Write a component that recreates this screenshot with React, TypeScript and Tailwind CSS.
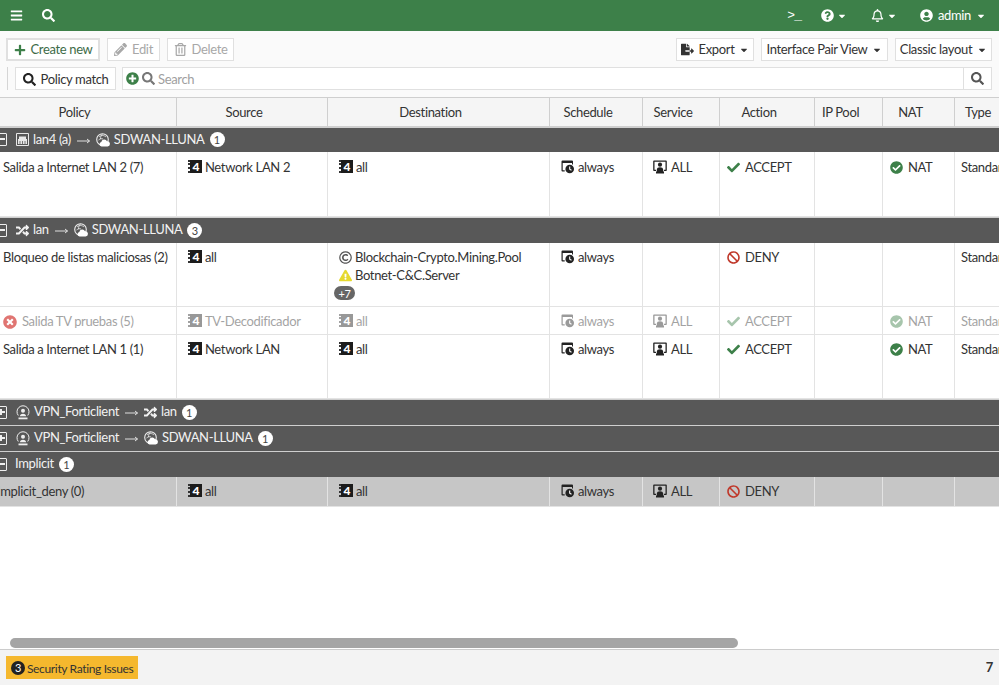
import type { ReactNode } from "react";
import {
  FaBars,
  FaBan,
  FaCaretDown,
  FaCheck,
  FaCheckCircle,
  FaExclamationTriangle,
  FaFileExport,
  FaPencilAlt,
  FaPlus,
  FaPlusCircle,
  FaQuestionCircle,
  FaRandom,
  FaRegBell,
  FaRegCopyright,
  FaRegTrashAlt,
  FaSearch,
  FaTimesCircle,
  FaUserCircle,
} from "react-icons/fa";

const cols = "grid grid-cols-[204px_151px_222px_93px_77px_95px_68px_72px_46px]";

function AddrIcon() {
  return (
    <span className="flex h-[13px] w-[14px] shrink-0 items-center tracking-normal">
      <span className="h-full w-[2px] border-l-2 border-dotted border-[#333]" />
      <span className="flex h-[13px] w-[12px] items-center justify-center bg-[#1c1c1c] text-[12px] font-black leading-none text-white">
        4
      </span>
    </span>
  );
}

function ScheduleIcon() {
  return (
    <svg width="14" height="14" viewBox="0 0 14 14" className="shrink-0">
      <path d="M1.500.5h9.500a1 1 0 0 1 1 1v3h-1V3H1.700v7.300h2V11.500H1.500a1 1 0 0 1-1-1v-9a1 1 0 0 1 1-1z" fill="#222" />
      <circle cx="8.700" cy="9" r="4.300" fill="#222" />
      <path d="M8.700 6.500v2.700l1.800 1.100" stroke="#fff" strokeWidth="1.100" fill="none" />
    </svg>
  );
}

function ServiceIcon() {
  return (
    <svg width="14" height="14" viewBox="0 0 14 14" className="shrink-0">
      <path d="M1 .5h12a.8.8 0 0 1 .8.8v8.900a.8.8 0 0 1-.8.8h-2V9.800h1.500V1.800H1.500v8H3V11H1a.8.8 0 0 1-.8-.8V1.300A.8.8 0 0 1 1 .5z" fill="#222" />
      <circle cx="7" cy="4.700" r="2.100" fill="#222" />
      <path d="M3.800 9.700c0-1.700 1.400-2.500 3.200-2.500s3.200.8 3.200 2.500v1.800h.8v2H3v-2h.8z" fill="#222" />
    </svg>
  );
}

function PortIcon() {
  return (
    <svg width="13" height="13" viewBox="0 0 13 13" className="shrink-0">
      <path d="M.5.5h12v12H.5z" fill="none" stroke="#e8e8e8" />
      <path d="M2 6h9v5H2z M3 3.500h7V6H3z" fill="#e8e8e8" />
      <path d="M4 8v3M6.500 8v3M9 8v3" stroke="#585858" strokeWidth=".8" />
    </svg>
  );
}

function SdwanIcon() {
  return (
    <svg width="14" height="14" viewBox="0 0 14 14" className="shrink-0">
      <circle cx="6.500" cy="6.500" r="5.800" fill="none" stroke="#eee" strokeWidth="1.100" />
      <path d="M3 4c2-2 5-2 7 0M2.500 7c2-1.500 3-1.500 4.500-1M6.500 1c-1.500 1.500-2 3-2 5" stroke="#eee" fill="none" strokeWidth=".8" />
      <path d="M5.500 13.500a2.300 2.300 0 0 1-.2-4.500 3 3 0 0 1 5.700-.7 2.600 2.600 0 0 1 .6 5.200z" fill="#fff" />
    </svg>
  );
}

function VpnIcon() {
  return (
    <svg width="14" height="15" viewBox="0 0 14 15" className="shrink-0">
      <path d="M2.300 10.500a6 6 0 1 1 9.400 0" fill="none" stroke="#eee" strokeWidth="1" />
      <circle cx="7" cy="5.800" r="2" fill="#eee" />
      <path d="M3.800 11.200c.6-1.800 1.700-2.500 3.200-2.500s2.600.7 3.200 2.500z" fill="#eee" />
      <path d="M2.500 12.500h9v1.800h-9z" fill="#eee" />
    </svg>
  );
}

function Arrow() {
  return (
    <svg width="13" height="8" viewBox="0 0 13 8" className="mx-[6px] mt-[2px] shrink-0">
      <path d="M0 4h12.500M10 2l2.500 2-2.500 2" fill="none" stroke="#eee" strokeWidth=".9" />
    </svg>
  );
}

function Toggle({ open }: { open: boolean }) {
  return (
    <span className="relative mr-[9px] h-[13px] w-[10px] shrink-0 rounded-[1px] border-[1.5px] border-[#eee]">
      <span className="absolute left-0 top-[4px] h-[2px] w-[7px] bg-[#eee]" />
      {!open && <span className="absolute left-[2px] top-[2px] h-[6px] w-[2px] bg-[#eee]" />}
    </span>
  );
}

function Count({ n }: { n: number }) {
  return (
    <span className="ml-[5px] flex h-[15px] w-[15px] items-center justify-center rounded-full bg-white text-[11px] leading-none tracking-normal text-[#444]">
      {n}
    </span>
  );
}

function Group({ open, children, n, h = "h-[26px]" }: { open: boolean; children: ReactNode; n: number; h?: string }) {
  return (
    <div className={`flex ${h} items-center border-t border-[#cfcfcf] bg-[#585858] pl-[24px] pb-[1px] text-[13px] text-[#f2f2f2]`}>
      <Toggle open={open} />
      {children}
      <Count n={n} />
    </div>
  );
}

function Cell({ children, className = "" }: { children?: ReactNode; className?: string }) {
  return (
    <div className={`flex min-w-0 items-start gap-[5px] overflow-hidden whitespace-nowrap border-r border-[#e3e3e3] pl-[11px] pt-[7px] ${className}`}>
      {children}
    </div>
  );
}

type RowProps = {
  name: string;
  source: string;
  dest?: ReactNode;
  action: "ACCEPT" | "DENY";
  service?: boolean;
  nat?: boolean;
  h: string;
  dim?: boolean;
  bg?: string;
  namePad?: string;
  className?: string;
};

function Row({ name, source, dest, action, service = true, nat = false, h, dim = false, bg = "bg-white", namePad = "pl-[30px]", className = "" }: RowProps) {
  const fade = dim ? "opacity-45" : "";
  return (
    <div className={`${cols} ${h} ${bg} ${className} border-b border-[#e3e3e3] text-[13px] leading-[15px] text-[#333]`}>
      <Cell className={namePad}>
        {dim && <FaTimesCircle className="mt-[1px] shrink-0 text-[14px] text-[#d9534f] opacity-80" />}
        <span className={fade}>{name}</span>
      </Cell>
      <Cell className="!pl-[11px]">
        <span className={`flex items-start gap-[3px] ${fade}`}>
          <AddrIcon />
          {source}
        </span>
      </Cell>
      <Cell>
        {dest ?? (
          <span className={`flex items-start gap-[3px] ${fade}`}>
            <AddrIcon />
            all
          </span>
        )}
      </Cell>
      <Cell className="!pl-[11px]">
        <span className={`flex items-start gap-[3px] ${fade}`}>
          <ScheduleIcon />
          always
        </span>
      </Cell>
      <Cell className="!pl-[10px]">
        {service && (
          <span className={`flex items-start gap-[4px] ${fade}`}>
            <ServiceIcon />
            ALL
          </span>
        )}
      </Cell>
      <Cell className="!pl-[7px]">
        <span className={`flex items-start gap-[5px] ${fade}`}>
          {action === "ACCEPT" ? (
            <FaCheck className="mt-[1px] text-[13px] text-[#3d8049]" />
          ) : (
            <FaBan className="mt-[1px] text-[13px] text-[#c0392b]" />
          )}
          {action}
        </span>
      </Cell>
      <Cell />
      <Cell className="!pl-[7px]">
        {nat && (
          <span className={`flex items-start gap-[5px] ${fade}`}>
            <FaCheckCircle className="mt-[1px] text-[13px] text-[#3d8049]" />
            NAT
          </span>
        )}
      </Cell>
      <Cell className="!pl-[6px] border-r-0">
        <span className={fade}>{name.startsWith("Imp") ? "" : "Standard"}</span>
      </Cell>
    </div>
  );
}

function Btn({ children, className = "", disabled = false }: { children: ReactNode; className?: string; disabled?: boolean }) {
  return (
    <button
      className={`flex h-[23px] items-center justify-center gap-[5px] whitespace-nowrap border border-[#e0e0e0] bg-white pt-[1px] text-[13px] tracking-[-0.35px] ${
        disabled ? "text-[#a8a8a8]" : "text-[#333]"
      } ${className}`}
    >
      {children}
    </button>
  );
}

function Head({ children, center = false }: { children?: ReactNode; center?: boolean }) {
  return (
    <div className={`flex items-center justify-center whitespace-nowrap border-r border-[#cfcfcf] pt-[2px] last:border-r-0 ${center ? "" : "pr-[16px]"}`}>
      {children}
    </div>
  );
}

export default function App() {
  return (
    <div className="flex h-[685px] w-[999px] flex-col overflow-hidden bg-white tracking-[-0.35px] [font-family:Lato,sans-serif]">
      <header className="flex h-[31px] shrink-0 items-center bg-[#3d8049] pl-[10px] pr-[13px] text-white">
        <FaBars className="text-[13px]" />
        <FaSearch className="ml-[19px] text-[13px]" />
        <div className="ml-auto flex items-center text-[13px]">
          <span className="mr-[20px] font-mono text-[13px] leading-none tracking-[-1px]">{">_"}</span>
          <FaQuestionCircle className="text-[13px]" />
          <FaCaretDown className="ml-[3px] text-[10px]" />
          <FaRegBell className="ml-[24px] text-[13px]" />
          <FaCaretDown className="ml-[3px] text-[10px]" />
          <FaUserCircle className="ml-[23px] text-[13px]" />
          <span className="ml-[5px]">admin</span>
          <FaCaretDown className="ml-[5px] text-[10px]" />
        </div>
      </header>

      <div className="h-[66px] shrink-0 bg-[#fafafa] pl-[6px] pr-[7px]">
        <div className="flex h-[36px] items-center gap-[7px]">
          <Btn className="w-[94px] border-2 border-[#6f9a78] !text-[#3d6b47]">
            <FaPlus className="text-[12px] text-[#3d8049]" />
            Create new
          </Btn>
          <Btn disabled className="w-[53px]">
            <FaPencilAlt className="text-[13px]" />
            Edit
          </Btn>
          <Btn disabled className="w-[67px]">
            <FaRegTrashAlt className="text-[13px]" />
            Delete
          </Btn>
          <Btn className="ml-auto w-[78px]">
            <FaFileExport className="text-[13px]" />
            Export
            <FaCaretDown className="text-[10px]" />
          </Btn>
          <Btn className="w-[127px]">
            Interface Pair View
            <FaCaretDown className="text-[10px]" />
          </Btn>
          <Btn className="w-[97px]">
            Classic layout
            <FaCaretDown className="text-[10px]" />
          </Btn>
        </div>
        <div className="flex h-[23px] items-stretch">
          <span className="mr-[7px] ml-[1px] w-px bg-[#d5d5d5]" />
          <Btn className="w-[101px] !pt-[2px]">
            <FaSearch className="text-[13px] text-[#222]" />
            Policy match
          </Btn>
          <div className="ml-[6px] flex flex-1 items-center border border-[#e0e0e0] bg-white pl-[3px] text-[13px] text-[#a0a0a0]">
            <FaPlusCircle className="text-[13px] text-[#3d8049]" />
            <FaSearch className="ml-[3px] text-[13px] text-[#777]" />
            <span className="ml-[3px] pt-[2px]">Search</span>
            <span className="ml-auto flex h-full w-[28px] items-center justify-center border-l border-[#e0e0e0]">
              <FaSearch className="text-[13px] text-[#555]" />
            </span>
          </div>
        </div>
      </div>

      <div className="min-h-0 flex-1 overflow-hidden">
        <div className="-ml-[27px] w-[1028px] text-[13px] text-[#333]">
          <div className={`${cols} h-[30px] border-y border-[#cfcfcf] bg-[#f5f5f5]`}>
            <Head center>Policy</Head>
            <Head>Source</Head>
            <Head>Destination</Head>
            <Head>Schedule</Head>
            <Head>Service</Head>
            <Head>Action</Head>
            <Head>IP Pool</Head>
            <Head>NAT</Head>
            <Head center>Type</Head>
          </div>

          <Group open n={1} h="h-[25px]">
            <PortIcon />
            <span className="ml-[4px]">lan4 (a)</span>
            <Arrow />
            <SdwanIcon />
            <span className="ml-[4px]">SDWAN-LLUNA</span>
          </Group>
          <Row name="Salida a Internet LAN 2 (7)" source="Network LAN 2" action="ACCEPT" nat h="h-[65px]" className="[&>div]:pt-[8px]" />

          <Group open n={3}>
            <FaRandom className="text-[13px]" />
            <span className="ml-[4px]">lan</span>
            <Arrow />
            <SdwanIcon />
            <span className="ml-[4px]">SDWAN-LLUNA</span>
          </Group>
          <Row
            name="Bloqueo de listas maliciosas (2)"
            source="all"
            action="DENY"
            service={false}
            h="h-[64px]"
            dest={
              <div className="flex flex-col">
                <span className="flex items-center gap-[3px]">
                  <FaRegCopyright className="text-[13px] text-[#555]" />
                  Blockchain-Crypto.Mining.Pool
                </span>
                <span className="mt-[3px] flex items-center gap-[3px]">
                  <FaExclamationTriangle className="text-[13px] text-[#e6d92e]" />
                  Botnet-C&amp;C.Server
                </span>
                <span className="-ml-[5px] mt-[3px] flex h-[14px] w-[21px] items-center justify-center rounded-full bg-[#666] text-[11px] leading-none text-white">
                  +7
                </span>
              </div>
            }
          />
          <Row name="Salida TV pruebas (5)" source="TV-Decodificador" action="ACCEPT" nat dim h="h-[28px]" />
          <Row name="Salida a Internet LAN 1 (1)" source="Network LAN" action="ACCEPT" nat h="h-[64px]" />

          <Group open={false} n={1}>
            <VpnIcon />
            <span className="ml-[4px]">VPN_Forticlient</span>
            <Arrow />
            <FaRandom className="text-[13px]" />
            <span className="ml-[4px]">lan</span>
          </Group>
          <Group open={false} n={1}>
            <VpnIcon />
            <span className="ml-[4px]">VPN_Forticlient</span>
            <Arrow />
            <SdwanIcon />
            <span className="ml-[4px]">SDWAN-LLUNA</span>
          </Group>
          <Group open n={1}>
            <span className="-ml-[1px]">Implicit</span>
          </Group>
          <Row name="Implicit_deny (0)" source="all" action="DENY" h="h-[30px]" bg="bg-[#c6c6c6]" namePad="pl-[24px]" />
        </div>
      </div>

      <div className="h-[11px] shrink-0 bg-white">
        <div className="ml-[10px] h-[10px] w-[728px] rounded-full bg-[#a5a5a5]" />
      </div>
      <footer className="flex h-[36px] shrink-0 items-center border-t border-[#cccccc] bg-[#f3f3f3] pl-[6px] pr-[6px]">
        <div className="flex h-[23px] w-[132px] items-center gap-[2px] whitespace-nowrap bg-[#f5b82e] pl-[5px] text-[12px] text-[#333]">
          <span className="flex h-[14px] w-[14px] items-center justify-center rounded-full bg-[#222] text-[11px] leading-none text-white">
            3
          </span>
          <span className="pt-[2px]">Security Rating Issues</span>
        </div>
        <span className="ml-auto text-[13px] font-bold text-[#333]">7</span>
      </footer>
    </div>
  );
}
